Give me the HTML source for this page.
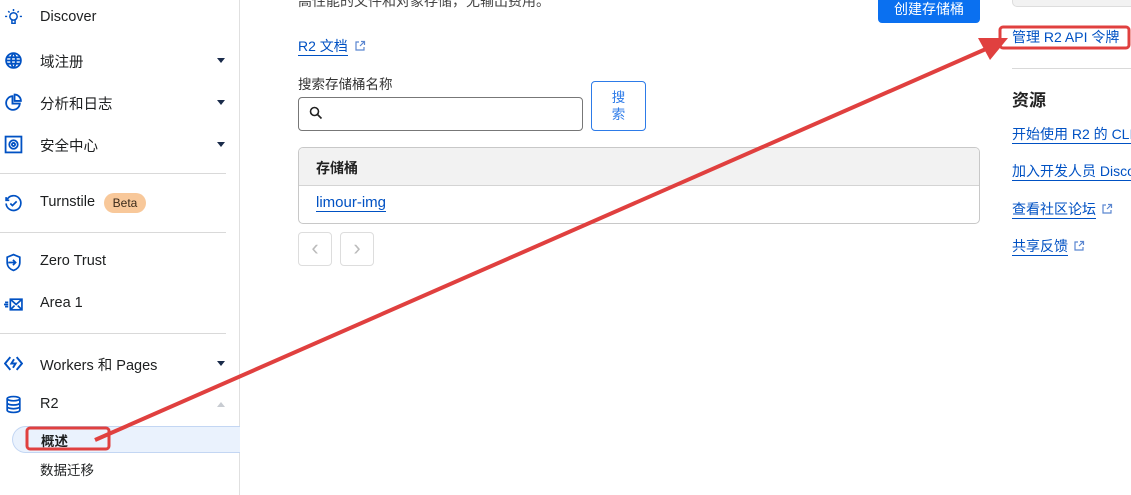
<!DOCTYPE html>
<html><head><meta charset="utf-8"><style>
*{margin:0;padding:0;box-sizing:border-box}
body{width:1131px;height:495px;overflow:hidden;background:#fff;font-family:"Liberation Sans","Noto Sans CJK SC",sans-serif;color:#222;position:relative;font-size:14px}
.a{position:absolute;white-space:nowrap}
.nav{left:40px;font-size:14.5px;color:#1d1f20}
.ic{position:absolute;left:4px;width:19px;height:19px}
.car{position:absolute;left:217px;width:0;height:0;border-left:4.5px solid transparent;border-right:4.5px solid transparent;border-top:5px solid #1a2b4a}
.hr{position:absolute;left:0;width:226px;height:1px;background:#d9d9d9}
.lk{color:#0051c3;border-bottom:1px solid #0051c3;font-size:14px;line-height:18px}
</style></head><body>
<div class="a" style="left:239px;top:0;width:1px;height:495px;background:#e0e0e0"></div>
<svg class="ic" style="top:8px" viewBox="0 0 18 18" fill="none" stroke="#0051c3" stroke-width="1.4"><circle cx="9" cy="8" r="3.5"/><path d="M7.5 11.5v3h3v-3M9 1v2M3 8H1M17 8h-2M4 3l1.3 1.3M14 3l-1.3 1.3"/></svg>
<div class="a nav" style="top:9px">Discover</div>
<svg class="ic" style="top:51px" viewBox="0 0 18 18" fill="none" stroke="#0051c3" stroke-width="1.7"><circle cx="9" cy="9" r="7"/><path d="M2 9h14M3 6h12M3 12h12M9 2c-3 3-3 11 0 14M9 2c3 3 3 11 0 14"/></svg>
<div class="a nav" style="top:51px">域注册</div><div class="car" style="top:58px"></div>
<svg class="ic" style="top:93px" viewBox="0 0 18 18" fill="none" stroke="#0051c3" stroke-width="1.7"><path d="M8 3a6.5 6.5 0 1 0 7 7H8z"/><path d="M10 1.5a6 6 0 0 1 6 6h-6z"/></svg>
<div class="a nav" style="top:93px">分析和日志</div><div class="car" style="top:100px"></div>
<svg class="ic" style="top:135px" viewBox="0 0 18 18" fill="none" stroke="#0051c3" stroke-width="1.7"><rect x="1.5" y="1.5" width="15" height="15"/><circle cx="9" cy="9" r="4"/><circle cx="9" cy="9" r="1.5"/></svg>
<div class="a nav" style="top:135px">安全中心</div><div class="car" style="top:142px"></div>
<div class="hr" style="top:173px"></div>
<svg class="ic" style="top:194px" viewBox="0 0 18 18" fill="none" stroke="#0051c3" stroke-width="1.6"><path d="M3 5a7 7 0 1 1-1 4M2 3v3h3M6 9l2 2 4-4"/></svg>
<div class="a nav" style="top:194px">Turnstile</div>
<div class="a" style="left:104px;top:193px;width:42px;height:20px;border-radius:10px;background:#f8c89a;font-size:12px;line-height:20px;text-align:center;color:#3a2a1a">Beta</div>
<div class="hr" style="top:232px"></div>
<svg class="ic" style="top:253px" viewBox="0 0 18 18" fill="none" stroke="#0051c3" stroke-width="1.6"><path d="M9 1.5l6 2.5v5c0 4-3 6.5-6 7.5-3-1-6-3.5-6-7.5V4zM4 9h7M8.5 6.5L11 9l-2.5 2.5"/></svg>
<div class="a nav" style="top:253px">Zero Trust</div>
<svg class="ic" style="top:295px" viewBox="0 0 18 18" fill="none" stroke="#0051c3" stroke-width="1.6"><rect x="6" y="4" width="11" height="10"/><path d="M6 4l5.5 5L17 4M6 14l4-4M17 14l-4-4M1 7h3M0 9h4M1 11h3"/></svg>
<div class="a nav" style="top:295px">Area 1</div>
<div class="hr" style="top:333px"></div>
<svg class="ic" style="top:354px" viewBox="0 0 18 18" fill="none" stroke="#0051c3" stroke-width="1.8"><path d="M6 3L1 9l5 6M12 3l5 6-5 6M9.5 5L7 9h4l-2.5 4"/></svg>
<div class="a nav" style="top:354px">Workers 和 Pages</div><div class="car" style="top:361px"></div>
<svg class="ic" style="top:395px" viewBox="0 0 18 18" fill="none" stroke="#0051c3" stroke-width="1.6"><ellipse cx="9" cy="3.5" rx="6" ry="2"/><path d="M3 3.5v11c0 1.1 2.7 2 6 2s6-.9 6-2v-11M3 7.5c0 1.1 2.7 2 6 2s6-.9 6-2M3 11c0 1.1 2.7 2 6 2s6-.9 6-2"/></svg>
<div class="a nav" style="top:396px">R2</div>
<div class="a" style="left:217px;top:402px;width:0;height:0;border-left:4.5px solid transparent;border-right:4.5px solid transparent;border-bottom:5px solid #c8ccd2"></div>
<div class="a" style="left:12px;top:426px;width:228px;height:27px;background:#eaf2fd;border:1px solid #c3d6f3;border-right:none;border-radius:14px 0 0 14px"></div>
<div class="a" style="left:41px;top:430px;font-size:13.5px;font-weight:bold;color:#1d1f20">概述</div>
<div class="a" style="left:40px;top:459px;font-size:13.5px;color:#1d1f20">数据迁移</div>

<div class="a" style="left:298px;top:-9px;font-size:14px;color:#444">高性能的文件和对象存储，无输出费用。</div>
<div class="a" style="left:878px;top:-8px;width:102px;height:31px;background:#0a70f0;border-radius:4px;color:#fff;font-size:14px;text-align:center;line-height:30px;padding-top:2px">创建存储桶</div>
<div class="a lk" style="left:298px;top:37px">R2 文档</div>
<svg class="a" style="left:354px;top:40px" width="12" height="12" viewBox="0 0 12 12" fill="none" stroke="#5b86d0" stroke-width="1.2"><path d="M5 2H2v8h8V7M7 1.5h3.5V5M10.5 1.5L6 6"/></svg>
<div class="a" style="left:298px;top:73px;font-size:13.5px;color:#333">搜索存储桶名称</div>
<div class="a" style="left:298px;top:97px;width:285px;height:34px;border:1px solid #777;border-radius:4px"></div>
<svg class="a" style="left:309px;top:106px" width="14" height="14" viewBox="0 0 14 14" fill="none" stroke="#222" stroke-width="1.6"><circle cx="5.5" cy="5.5" r="4"/><path d="M8.5 8.5l4 4"/></svg>
<div class="a" style="left:591px;top:81px;width:55px;height:50px;border:1px solid #2d7be8;border-radius:4px;color:#2d7be8;font-size:13.5px;text-align:center;line-height:17px;padding-top:7px;white-space:normal">搜<br>索</div>
<div class="a" style="left:298px;top:147px;width:682px;height:77px;border:1px solid #c8c8c8;border-radius:5px;overflow:hidden">
<div style="height:38px;background:#f2f2f2;border-bottom:1px solid #d4d4d4;font-weight:bold;font-size:14px;padding:10px 0 0 17px">存储桶</div>
<div style="padding:8px 0 0 17px"><span class="lk" style="font-size:15px">limour-img</span></div></div>
<div class="a" style="left:298px;top:232px;width:34px;height:34px;border:1px solid #ddd;border-radius:4px;color:#bbb;text-align:center;line-height:30px;font-size:22px">&#x2039;</div>
<div class="a" style="left:340px;top:232px;width:34px;height:34px;border:1px solid #ddd;border-radius:4px;color:#bbb;text-align:center;line-height:30px;font-size:22px">&#x203A;</div>

<div class="a" style="left:1012px;top:-10px;width:130px;height:17px;background:#f2f2f2;border:1px solid #ddd;border-radius:5px"></div>
<div class="a lk" style="left:1012px;top:28px;border:none">管理 R2 API 令牌</div>
<div class="a" style="left:1012px;top:68px;width:119px;height:1px;background:#d9d9d9"></div>
<div class="a" style="left:1012px;top:86px;font-size:17px;font-weight:bold;color:#222">资源</div>
<div class="a lk" style="left:1012px;top:125px">开始使用 R2 的 CLI</div>
<div class="a lk" style="left:1012px;top:162px">加入开发人员 Discord</div>
<div class="a lk" style="left:1012px;top:200px">查看社区论坛</div>
<svg class="a" style="left:1101px;top:203px" width="12" height="12" viewBox="0 0 12 12" fill="none" stroke="#5b86d0" stroke-width="1.2"><path d="M5 2H2v8h8V7M7 1.5h3.5V5M10.5 1.5L6 6"/></svg>
<div class="a lk" style="left:1012px;top:237px">共享反馈</div>
<svg class="a" style="left:1073px;top:240px" width="12" height="12" viewBox="0 0 12 12" fill="none" stroke="#5b86d0" stroke-width="1.2"><path d="M5 2H2v8h8V7M7 1.5h3.5V5M10.5 1.5L6 6"/></svg>

<svg class="a" style="left:0;top:0" width="1131" height="495">
<rect x="27" y="428" width="82" height="21" rx="3" fill="none" stroke="#e0403f" stroke-width="3"/>
<rect x="1000" y="27" width="129" height="21" rx="3" fill="none" stroke="#e0403f" stroke-width="3"/>
<line x1="95" y1="440" x2="995" y2="45" stroke="#e0403f" stroke-width="4"/>
<polygon points="1008,38 978,38 990,60" fill="#e0403f"/>
</svg>
</body></html>
